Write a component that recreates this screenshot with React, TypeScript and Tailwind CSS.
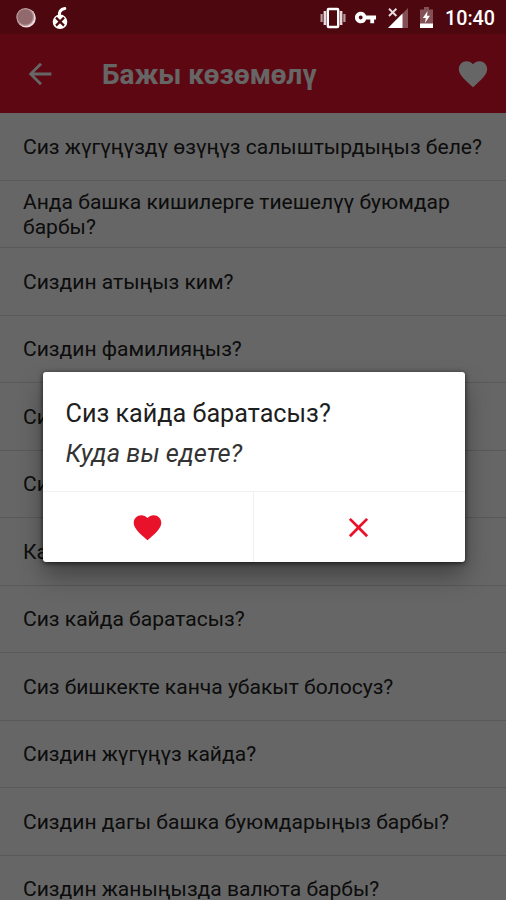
import { MdArrowBack, MdClose, MdFavorite, MdVpnKey } from "react-icons/md";

const phrases = [
  "Сиз жүгүңүздү өзүңүз салыштырдыңыз беле?",
  "Анда башка кишилерге тиешелүү буюмдар барбы?",
  "Сиздин атыңыз ким?",
  "Сиздин фамилияңыз?",
  "Сиз",
  "Сиз",
  "Кай",
  "Сиз кайда баратасыз?",
  "Сиз бишкекте канча убакыт болосуз?",
  "Сиздин жүгүңүз кайда?",
  "Сиздин дагы башка буюмдарыңыз барбы?",
  "Сиздин жаныңызда валюта барбы?",
];

function StatusBar() {
  return (
    <div className="relative z-20 flex h-[34px] shrink-0 items-center bg-[#4d070f] pl-4 pr-[11px] pt-px text-white">
      <svg className="h-5 w-5" viewBox="0 0 20 20">
        <circle cx="10.3" cy="10" r="9.5" fill="#ead9da" />
        <circle cx="9.2" cy="9" r="8.6" fill="#926a6e" />
        <circle cx="9.2" cy="9" r="8.3" fill="none" stroke="#b59598" strokeWidth="1.2" />
      </svg>
      <svg className="ml-4 h-6 w-4" viewBox="0 0 16 24">
        <circle cx="8" cy="15.8" r="7.3" fill="#fff" />
        <path d="M7.6 10C6.6 6.5 8.5 3 12.8 2.4" fill="none" stroke="#fff" strokeWidth="3" strokeLinecap="round" />
        <path d="M4 11.6l8 8M12 11.6l-8 8" stroke="#4d070f" strokeWidth="2.2" />
      </svg>

      <div className="ml-auto flex items-center">
        <svg className="h-[22px] w-[26px]" viewBox="0 0 26 22">
          <rect x="7.8" y="2" width="10.4" height="18" rx="1" fill="none" stroke="#fff" strokeWidth="2.4" />
          <path d="M4.9 4v14M21.1 4v14" stroke="#e6d8d9" strokeWidth="2.6" />
          <path d="M1.6 7v8M24.4 7v8" stroke="#b89a9d" strokeWidth="2.2" />
        </svg>
        <MdVpnKey className="ml-2 h-[23px] w-[23px]" />
        <svg className="ml-[11px] h-[22px] w-5" viewBox="0 0 20 22">
          <path d="M20 1v20H0z" fill="#825055" />
          <path d="M14.5 6.5V21H0z" fill="#fff" />
          <path d="M0 0h10v10.5H0z" fill="#4d070f" />
          <path d="M1 1.8l7.4 7.2M8.4 1.8L1 9" stroke="#e8dcdd" strokeWidth="1.9" />
        </svg>
        <svg className="ml-3 h-[22px] w-[13px]" viewBox="0 0 13 22">
          <path d="M4 0h5v2.5h4V17H0V2.5h4z" fill="#825055" />
          <path d="M0 16.5h13V21H0z" fill="#fff" />
          <path d="M7.6 4L2.8 11h3l-.8 5 5-7.2H7z" fill="#fff" />
        </svg>
        <span className="ml-3 mt-[2px] text-[19.7px] font-medium leading-6">10:40</span>
      </div>
    </div>
  );
}

function PhraseDialog() {
  return (
    <div className="h-[190px] w-[422px] rounded-[3px] bg-white shadow-[0_14px_24px_rgba(0,0,0,0.35),0_1px_5px_rgba(0,0,0,0.7)]">
      <div className="h-[119px] px-[23px] pt-[22px] text-[25.2px] text-[#1e1e1e]">
        <p className="leading-10">Сиз кайда баратасыз?</p>
        <p className="text-[25.4px] italic leading-[39px] text-[#333]">Куда вы едете?</p>
      </div>
      <div className="grid h-[71px] grid-cols-2 border-t border-[#f0f0f0] text-[#e8132b]">
        <button className="flex items-center justify-center border-r border-[#f0f0f0]">
          <MdFavorite className="h-[33px] w-[33px]" />
        </button>
        <button className="flex items-center justify-center pr-px">
          <MdClose className="h-[33px] w-[33px]" />
        </button>
      </div>
    </div>
  );
}

export default function App() {
  return (
    <div className="relative flex h-[900px] w-[506px] flex-col overflow-hidden bg-white font-['Roboto',sans-serif]">
      <StatusBar />
      <header className="flex h-[79px] shrink-0 items-center bg-[#e8132d] pl-[23px] pr-4 text-white">
        <MdArrowBack className="h-[34px] w-[34px]" />
        <h1 className="ml-[45px] pt-0.5 text-[27.9px] font-bold">Бажы көзөмөлү</h1>
        <MdFavorite className="ml-auto h-[34px] w-[34px]" />
      </header>

      <ul className="text-[21.05px] leading-[25px] text-[#212121]">
        {phrases.map((phrase, i) => (
          <li
            key={i}
            className="flex h-[67.5px] items-center border-b border-[#dedede] pl-[23px] pr-[20px]"
          >
            {phrase}
          </li>
        ))}
      </ul>

      {/* Scrim; the status bar stays above it */}
      <div className="absolute inset-0 z-10 flex items-start justify-center bg-black/60 pl-px pt-[372px]">
        <PhraseDialog />
      </div>
    </div>
  );
}
